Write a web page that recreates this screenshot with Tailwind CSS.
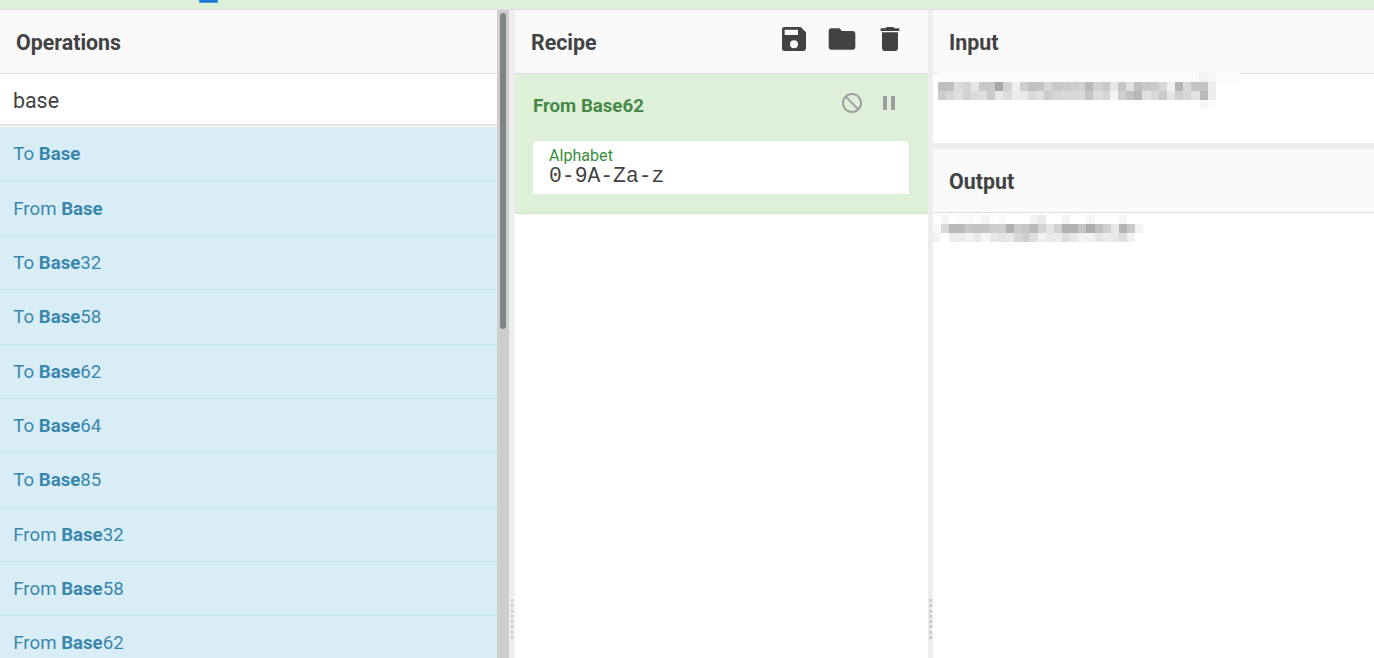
<!DOCTYPE html>
<html lang="en">
<head>
<meta charset="utf-8">
<title>Recipe editor</title>
<script src="https://cdn.jsdelivr.net/npm/@tailwindcss/browser@4"></script>
</head>
<body class="w-[1374px] h-[658px] overflow-hidden flex flex-col bg-white font-[Roboto,sans-serif] text-[#424242]">
<div class="h-[10px] shrink-0 bg-[#dff0d8] border-b border-[#ddd] flex"><div class="ml-[199px] w-[19px] h-[3px] bg-[#1976d2] border-b border-x border-[#4a92dc]"></div></div>
<main class="flex flex-1 min-h-0">
  <section class="w-[497px] flex flex-col overflow-hidden">
    <h2 class="h-16 shrink-0 bg-[#fafafa] border-b border-[#ddd] pl-4 text-[21.36px] font-bold leading-[66px]">Operations</h2>
    <div class="h-[52px] shrink-0 border-b-2 border-[#e0e0e0] pl-[13px] text-[21.36px] leading-[53px]">base</div>
    <ul class="mt-[1.4px] text-[18.67px] text-[#3a87ad]">
      <li class="h-[54.33px] bg-[#d9edf7] border-b border-[#bce8f1] pl-[13.3px] leading-[55px]">To <b>Base</b></li>
      <li class="h-[54.33px] bg-[#d9edf7] border-b border-[#bce8f1] pl-[13.3px] leading-[55px]">From <b>Base</b></li>
      <li class="h-[54.33px] bg-[#d9edf7] border-b border-[#bce8f1] pl-[13.3px] leading-[55px]">To <b>Base</b>32</li>
      <li class="h-[54.33px] bg-[#d9edf7] border-b border-[#bce8f1] pl-[13.3px] leading-[55px]">To <b>Base</b>58</li>
      <li class="h-[54.33px] bg-[#d9edf7] border-b border-[#bce8f1] pl-[13.3px] leading-[55px]">To <b>Base</b>62</li>
      <li class="h-[54.33px] bg-[#d9edf7] border-b border-[#bce8f1] pl-[13.3px] leading-[55px]">To <b>Base</b>64</li>
      <li class="h-[54.33px] bg-[#d9edf7] border-b border-[#bce8f1] pl-[13.3px] leading-[55px]">To <b>Base</b>85</li>
      <li class="h-[54.33px] bg-[#d9edf7] border-b border-[#bce8f1] pl-[13.3px] leading-[55px]">From <b>Base</b>32</li>
      <li class="h-[54.33px] bg-[#d9edf7] border-b border-[#bce8f1] pl-[13.3px] leading-[55px]">From <b>Base</b>58</li>
      <li class="h-[54.33px] bg-[#d9edf7] border-b border-[#bce8f1] pl-[13.3px] leading-[55px]">From <b>Base</b>62</li>
    </ul>
  </section>
  <div class="w-3 bg-[#cecece] px-[3px] pt-[3px]"><div class="h-[316px] rounded-full bg-[#7f8484]"></div></div>
  <div class="w-[6px] bg-[#eee] flex flex-col items-center pt-[589px] gap-[2.3px]">
    <i class="w-[2px] h-[3px] shrink-0 bg-[#ccc]"></i><i class="w-[2px] h-[3px] shrink-0 bg-[#ccc]"></i><i class="w-[2px] h-[3px] shrink-0 bg-[#ccc]"></i><i class="w-[2px] h-[3px] shrink-0 bg-[#ccc]"></i><i class="w-[2px] h-[3px] shrink-0 bg-[#ccc]"></i><i class="w-[2px] h-[3px] shrink-0 bg-[#ccc]"></i><i class="w-[2px] h-[3px] shrink-0 bg-[#ccc]"></i><i class="w-[2px] h-[3px] shrink-0 bg-[#ccc]"></i>
  </div>
  <section class="w-[413px] flex flex-col">
    <div class="h-16 bg-[#fafafa] border-b border-[#ddd] pl-4 pr-[22px] flex justify-between">
      <h2 class="text-[21.36px] font-bold leading-[66px]">Recipe</h2>
      <div class="flex gap-4 pt-[13px]">
        <svg class="size-8" viewBox="0 0 24 24" fill="#424242"><path d="M17 3H5a2 2 0 0 0-2 2v14a2 2 0 0 0 2 2h14c1.1 0 2-.9 2-2V7l-4-4zm-5 16a3 3 0 1 1 0-6 3 3 0 0 1 0 6zm3-10H5V5h10v4z"/></svg>
        <svg class="size-8" viewBox="0 0 24 24" fill="#424242"><path d="M10 4H4c-1.1 0-2 .9-2 2v12c0 1.100.9 2 2 2h16c1.100 0 2-.9 2-2V8c0-1.100-.9-2-2-2h-8l-2-2z"/></svg>
        <svg class="size-8" viewBox="0 0 24 24" fill="#424242"><path d="M6 19c0 1.100.9 2 2 2h8c1.100 0 2-.9 2-2V7H6v12zM19 4h-3.500l-1-1h-5l-1 1H5v2h14V4z"/></svg>
      </div>
    </div>
    <div class="h-[140px] bg-[#dff0d8] border-b border-[#d0e6bf] pl-[18px] pr-[19px]">
      <div class="h-[67px] flex justify-between pr-[8px]">
        <div class="text-[18.67px] leading-[65px] font-bold text-[#468847]">From Base62</div>
        <div class="flex pt-[17px] gap-[13px]">
          <svg class="size-6" viewBox="0 0 24 24" fill="#9e9e9e"><path d="M12 2C6.480 2 2 6.480 2 12s4.480 10 10 10 10-4.480 10-10S17.520 2 12 2zM4 12c0-4.420 3.580-8 8-8 1.850 0 3.550.63 4.900 1.690L5.690 16.900C4.630 15.550 4 13.850 4 12zm8 8c-1.850 0-3.550-.63-4.900-1.690L18.310 7.100C19.370 8.450 20 10.150 20 12c0 4.420-3.580 8-8 8z" transform="matrix(-1 0 0 1 24 0)"/></svg>
          <svg class="size-6" viewBox="0 0 24 24" fill="#9e9e9e"><path d="M6 19h4V5H6v14zm8-14v14h4V5h-4z"/></svg>
        </div>
      </div>
      <div class="h-[53px] bg-white rounded-t-[5px] pl-4 pt-[6px]">
        <div class="text-[16px] leading-[18px] text-[#388e3c] tracking-[0.05px]">Alphabet</div>
        <div class="font-['Liberation_Mono',monospace] text-[21.36px] leading-[22px]">0-9A-Za-z</div>
      </div>
    </div>
  </section>
  <div class="w-[5px] bg-[#eee] flex flex-col items-center pt-[589px] gap-[2.3px]">
    <i class="w-[3px] h-[3px] shrink-0 bg-[#ccc]"></i><i class="w-[3px] h-[3px] shrink-0 bg-[#ccc]"></i><i class="w-[3px] h-[3px] shrink-0 bg-[#ccc]"></i><i class="w-[3px] h-[3px] shrink-0 bg-[#ccc]"></i><i class="w-[3px] h-[3px] shrink-0 bg-[#ccc]"></i><i class="w-[3px] h-[3px] shrink-0 bg-[#ccc]"></i><i class="w-[3px] h-[3px] shrink-0 bg-[#ccc]"></i><i class="w-[3px] h-[3px] shrink-0 bg-[#ccc]"></i>
  </div>
  <section class="flex-1 flex flex-col">
    <h2 class="h-16 bg-[#fafafa] border-b border-[#ddd] pl-4 text-[21.36px] font-bold leading-[66px]">Input</h2>
    <div class="h-[69px]">
      <div class="relative -top-px ml-[5px] w-[302px] h-[9px] bg-[#fbfbfb]"><div class="absolute left-[261px] w-2 h-[9px] bg-[#f2f2f2]"></div><div class="absolute left-[269px] w-[9px] h-[9px] bg-[#f7f7f7]"></div></div>
      <div class="-mt-px ml-[5px] w-[278px] grid grid-cols-[repeat(34,minmax(0,1fr))] auto-rows-[9px]" data-cells="bebfdcd4e7c9c8a8d3efcec1c4d7c9cacdd0b8d1c8e5c7e0c0c7cad7f2b4d9c4c3eeccd6dfd2dcdfcbe8dcece9d8e0cbd5d9d9dac5dcd6f4cec1b7e0d8c9e4cfd8e2b9eefffffffffffffffffffffffffffffffffffffffffffffffffffffffffffffffff6fb"></div>
    </div>
    <div class="h-[6px] bg-[#eee]"></div>
    <h2 class="h-16 bg-[#fafafa] border-b border-[#ddd] pl-4 text-[21.36px] font-bold leading-[66px]">Output</h2>
    <div class="mt-[2px] w-[210px] grid grid-cols-[repeat(26,minmax(0,1fr))] auto-rows-[9px]" data-cells="fff5fffbfafdf4fefbfffffff3eafffff3fffff6fdfdfff5fffff9d9b9bac8c2c4cfcfb1cbc6b9d5e4d2b2b1c4adc2cfe8b4caf4f3ffececf2e9f4e7e3e9d7cfe0f1e8ebdee8f2f1e6ece8def2ff"></div>
  </section>
</main>
<script>
// Each pair of hex digits is the grey level of one mosaic cell.
for (const grid of document.querySelectorAll('[data-cells]')) {
  for (const v of grid.dataset.cells.match(/../g)) {
    const c = document.createElement('i');
    c.style.backgroundColor = '#' + v + v + v;
    grid.append(c);
  }
}
</script>
</body>
</html>
